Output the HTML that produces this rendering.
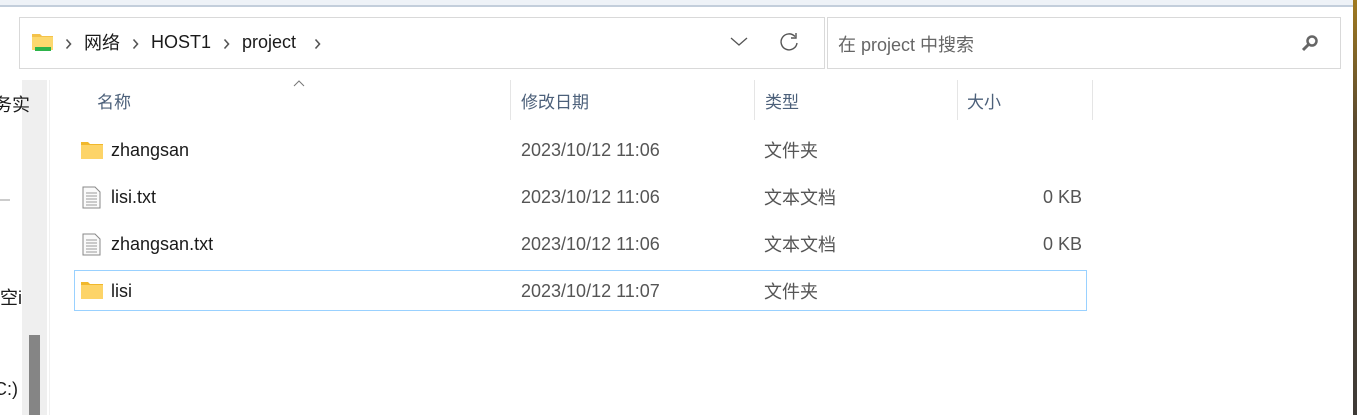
<!DOCTYPE html>
<html><head><meta charset="utf-8"><style>
*{margin:0;padding:0;box-sizing:border-box}
body{width:1357px;height:415px;overflow:hidden;background:#fff;position:relative;font-family:"Liberation Sans","Noto Sans CJK SC",sans-serif;color:#1a1a1a}
.a{position:absolute}
.t{font-size:18px;white-space:nowrap}
.g{color:#555}
.h{color:#4c607a;font-size:17px}
</style></head><body>
<div class="a" style="left:0;top:0;width:1353px;height:5px;background:#eef2f7"></div>
<div class="a" style="left:0;top:5px;width:1353px;height:2px;background:#c3cedb"></div>
<div class="a" style="left:1353px;top:0;width:4px;height:415px;background:linear-gradient(#a07a20,#5a4a30 30%,#3e3a36)"></div>

<div class="a" style="left:19px;top:17px;width:806px;height:52px;border:1px solid #d9d9d9"></div>
<svg class="a" style="left:31px;top:32px" width="24" height="22" viewBox="0 0 24 22"><path d="M1 2h8l2 2h11v14H1z" fill="#f4c24a"/><rect x="1" y="5" width="21" height="13" fill="#fcd86e"/><rect x="4" y="15" width="16" height="4" fill="#2db34a"/></svg>
<svg class="a" style="left:65px;top:38px" width="8" height="12"><path d="M1.5 1.5l4 4.5-4 4.5" stroke="#555" stroke-width="1.6" fill="none"/></svg>
<div class="a t" style="left:84px;top:29px">网络</div>
<svg class="a" style="left:132px;top:38px" width="8" height="12"><path d="M1.5 1.5l4 4.5-4 4.5" stroke="#555" stroke-width="1.6" fill="none"/></svg>
<div class="a t" style="left:151px;top:32px">HOST1</div>
<svg class="a" style="left:223px;top:38px" width="8" height="12"><path d="M1.5 1.5l4 4.5-4 4.5" stroke="#555" stroke-width="1.6" fill="none"/></svg>
<div class="a t" style="left:242px;top:32px">project</div>
<svg class="a" style="left:314px;top:38px" width="8" height="12"><path d="M1.5 1.5l4 4.5-4 4.5" stroke="#555" stroke-width="1.6" fill="none"/></svg>
<svg class="a" style="left:730px;top:37px" width="18" height="10"><path d="M1 1l8 7 8-7" stroke="#555" fill="none" stroke-width="1.3"/></svg>
<svg class="a" style="left:778px;top:31px" width="22" height="22"><path d="M17 5.5A8 8 0 1 0 19 12" stroke="#555" fill="none" stroke-width="1.4"/><path d="M18 2v5h-5" stroke="#555" fill="none" stroke-width="1.4"/></svg>

<div class="a" style="left:827px;top:17px;width:514px;height:52px;border:1px solid #d9d9d9"></div>
<div class="a t" style="left:838px;top:31px;color:#666;font-size:18px">在 project 中搜索</div>
<svg class="a" style="left:1301px;top:34px" width="18" height="18"><circle cx="11" cy="7" r="4.5" stroke="#666" stroke-width="2.5" fill="none"/><path d="M8 10l-6 6" stroke="#666" stroke-width="3"/></svg>

<div class="a" style="left:22px;top:80px;width:25px;height:335px;background:#efefef"></div>
<div class="a" style="left:29px;top:335px;width:11px;height:80px;background:#858585"></div>
<div class="a" style="left:49px;top:80px;width:1px;height:335px;background:#f0f0f0"></div>
<div class="a t" style="left:-6px;top:91px">务实</div>
<div class="a" style="left:0;top:199px;width:10px;height:2px;background:#ccc"></div>
<div class="a t" style="left:0;top:284px">空i</div>
<div class="a t" style="left:-6px;top:379px">C:)</div>

<svg class="a" style="left:293px;top:79px" width="12" height="8"><path d="M1 7l5-5 5 5" stroke="#777" fill="none"/></svg>
<div class="a h" style="left:97px;top:88px">名称</div>
<div class="a" style="left:510px;top:80px;width:1px;height:40px;background:#e5e5e5"></div>
<div class="a h" style="left:521px;top:88px">修改日期</div>
<div class="a" style="left:754px;top:80px;width:1px;height:40px;background:#e5e5e5"></div>
<div class="a h" style="left:765px;top:88px">类型</div>
<div class="a" style="left:957px;top:80px;width:1px;height:40px;background:#e5e5e5"></div>
<div class="a h" style="left:967px;top:88px">大小</div>
<div class="a" style="left:1092px;top:80px;width:1px;height:40px;background:#e5e5e5"></div>

<div class="a" style="left:74px;top:270px;width:1013px;height:41px;border:1px solid #99d1ff"></div>

<svg class="a" style="left:80px;top:141px" width="24" height="19"><path d="M1 1h7l2 2h13v15H1z" fill="#f1b82c"/><rect x="1" y="4" width="22" height="14" fill="#fdd468"/></svg>
<svg class="a" style="left:82px;top:186px" width="19" height="23"><path d="M1 1h12l5 5v16H1z" fill="#fafafa" stroke="#888"/><path d="M4 7h11M4 10h11M4 13h11M4 16h11M4 19h11" stroke="#999"/></svg>
<svg class="a" style="left:82px;top:233px" width="19" height="23"><path d="M1 1h12l5 5v16H1z" fill="#fafafa" stroke="#888"/><path d="M4 7h11M4 10h11M4 13h11M4 16h11M4 19h11" stroke="#999"/></svg>
<svg class="a" style="left:80px;top:281px" width="24" height="19"><path d="M1 1h7l2 2h13v15H1z" fill="#f1b82c"/><rect x="1" y="4" width="22" height="14" fill="#fdd468"/></svg>

<div class="a t" style="left:111px;top:140px">zhangsan</div>
<div class="a t" style="left:111px;top:187px">lisi.txt</div>
<div class="a t" style="left:111px;top:234px">zhangsan.txt</div>
<div class="a t" style="left:111px;top:281px">lisi</div>

<div class="a t g" style="left:521px;top:140px">2023/10/12 11:06</div>
<div class="a t g" style="left:521px;top:187px">2023/10/12 11:06</div>
<div class="a t g" style="left:521px;top:234px">2023/10/12 11:06</div>
<div class="a t g" style="left:521px;top:281px">2023/10/12 11:07</div>

<div class="a t g" style="left:764px;top:137px">文件夹</div>
<div class="a t g" style="left:764px;top:184px">文本文档</div>
<div class="a t g" style="left:764px;top:231px">文本文档</div>
<div class="a t g" style="left:764px;top:278px">文件夹</div>

<div class="a t g" style="left:1043px;top:187px">0 KB</div>
<div class="a t g" style="left:1043px;top:234px">0 KB</div>
</body></html>
